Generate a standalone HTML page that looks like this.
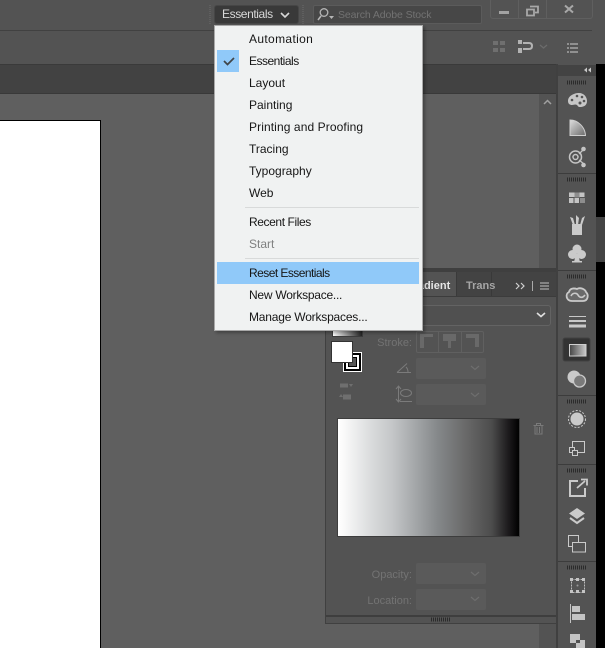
<!DOCTYPE html>
<html><head><meta charset="utf-8"><style>
html,body{margin:0;padding:0;background:#5f5f5f}
#r{position:relative;width:605px;height:648px;overflow:hidden;font-family:"Liberation Sans",sans-serif;background:#5f5f5f}
#r div{position:absolute;box-sizing:border-box}
.mi{left:249px;font-size:12px;line-height:22px;height:22px;color:#161616;white-space:nowrap}
.sel{background:#5a5a5a;border-radius:2px}
.lb{font-size:11px;color:#737373;text-align:right;width:70px;left:342px;line-height:14px}
svg{position:absolute;left:0;top:0}
</style></head><body><div id="r">
<div style="left:0;top:0;width:605px;height:30px;background:#535353"></div>
<div style="left:0;top:30px;width:605px;height:1px;background:#414141"></div>
<div style="left:0;top:31px;width:605px;height:33px;background:#535353"></div>
<div style="left:0;top:64px;width:556px;height:30px;background:#424242;border-top:1px solid #3a3a3a;border-bottom:1px solid #393939"></div>
<div style="left:100px;top:120px;width:1px;height:528px;background:#000"></div>
<div style="left:0;top:120px;width:100px;height:528px;background:#fff;border-top:1px solid #000"></div>
<div style="left:539px;top:94px;width:17px;height:174px;background:#535353"></div>
<div style="left:539px;top:624px;width:17px;height:24px;background:#535353"></div>
<div style="left:556px;top:64px;width:2px;height:584px;background:#404040"></div>
<div style="left:558px;top:64px;width:38px;height:584px;background:#535353"></div>
<div style="left:558px;top:65px;width:38px;height:11px;background:#434343"></div>
<div style="left:596px;top:0;width:9px;height:648px;background:#000"></div>
<div style="left:592px;top:0;width:13px;height:64px;background:#535353"></div>
<div style="left:596px;top:217px;width:9px;height:45px;background:#444"></div>

<div style="left:214px;top:5px;width:85px;height:19px;background:#393939;border:1px solid #464646;border-radius:3px"></div>
<div style="left:222px;top:7px;font-size:12px;line-height:15px;color:#d8d8d8;white-space:nowrap;letter-spacing:-.4px">Essentials</div>
<div style="left:313px;top:5px;width:169px;height:19px;background:#474747;border:1px solid #5b5b5b;border-radius:2px"></div>
<div style="left:338px;top:8px;font-size:10.5px;line-height:14px;color:#727272;white-space:nowrap;letter-spacing:-.1px">Search Adobe Stock</div>
<div style="left:490px;top:-2px;width:103px;height:21px;border:1px solid #5f5f5f;border-radius:3px"></div>
<div style="left:518px;top:0;width:1px;height:18px;background:#5f5f5f"></div>
<div style="left:546px;top:0;width:1px;height:18px;background:#5f5f5f"></div>

<!-- gradient panel -->
<div style="left:325px;top:268px;width:231px;height:356px;background:#535353;border-left:1px solid #404040;border-bottom:1px solid #404040"></div>
<div style="left:326px;top:268px;width:230px;height:4px;background:#3f3f3f"></div>
<div style="left:326px;top:272px;width:230px;height:24px;background:#434343"></div>
<div style="left:326px;top:272px;width:131px;height:25px;background:#535353;border-right:1px solid #3a3a3a"></div>
<div style="left:491px;top:272px;width:1px;height:24px;background:#393939"></div>
<div style="left:326px;top:296px;width:230px;height:1px;background:#3c3c3c"></div>
<div style="left:405px;top:279px;font-size:11px;line-height:14px;font-weight:bold;color:#e6e6e6;white-space:nowrap">Gradient</div>
<div style="left:466px;top:279px;font-size:11px;line-height:14px;font-weight:bold;color:#a6a6a6;white-space:nowrap">Trans</div>
<div style="left:410px;top:305px;width:141px;height:21px;background:#505050;border:1px solid #636363;border-radius:3px"></div>
<div style="left:332px;top:325px;width:31px;height:12px;background:linear-gradient(90deg,#fff,#222);border:1px solid #3c3c3c"></div>
<div style="left:343px;top:352px;width:19px;height:20px;background:#000;border:1px solid #fff"></div>
<div style="left:346px;top:355px;width:13px;height:14px;background:#fff;padding:0"></div>
<div style="left:348px;top:357px;width:9px;height:10px;background:#555;border:1px solid #000"></div>
<div style="left:332px;top:342px;width:20px;height:20px;background:#fff;outline:1px solid #333"></div>
<div class="lb" style="top:336px">Stroke:</div>
<div style="left:416px;top:331px;width:68px;height:22px;border:1px solid #606060;border-radius:2px"></div>
<div style="left:438px;top:331px;width:1px;height:22px;background:#606060"></div>
<div style="left:461px;top:331px;width:1px;height:22px;background:#606060"></div>
<div class="sel" style="left:416px;top:358px;width:70px;height:21px"></div>
<div class="sel" style="left:416px;top:384px;width:70px;height:21px"></div>
<div style="left:337px;top:418px;width:183px;height:119px;border:1px solid #3d3d3d;background:linear-gradient(90deg,#fff 0%,#fafafa 3%,#d6d8d9 20%,#c4c6c8 30%,#9ea1a3 45%,#85888a 55%,#6a6a6a 70%,#4c4c4c 85%,#1d1b1d 94%,#000 100%)"></div>
<div class="lb" style="top:568px">Opacity:</div>
<div class="lb" style="top:594px">Location:</div>
<div class="sel" style="left:416px;top:563px;width:70px;height:21px"></div>
<div class="sel" style="left:416px;top:589px;width:70px;height:21px"></div>
<div style="left:326px;top:615px;width:230px;height:2px;background:#3e3e3e"></div>

<svg width="605" height="648" viewBox="0 0 605 648" fill="none">
<!-- grips top -->
<path d="M210 5v19M303 5v19" stroke="#5f5f5f" stroke-width="2" stroke-dasharray="1 1"/>
<path d="M281 13l4 4 4-4" stroke="#d8d8d8" stroke-width="1.600"/>
<!-- search -->
<circle cx="324" cy="12.500" r="3.800" stroke="#b5b5b5" stroke-width="1.300"/>
<path d="M321 16l-3 4" stroke="#b5b5b5" stroke-width="1.600"/><path d="M329 16h5l-2.500 3z" fill="#b5b5b5"/>
<!-- window -->
<rect x="499" y="11" width="10" height="3" fill="#a3a3a3"/>
<path d="M530 6.500h8v6h-3M527 9.500h7v6h-7z" stroke="#a8a8a8" stroke-width="1.800"/>
<path d="M565 5.500l8 7M573 5.500l-8 7" stroke="#a8a8a8" stroke-width="2"/>
<!-- control bar -->
<g fill="#6f6f6f"><rect x="493" y="41" width="5" height="4"/><rect x="500" y="41" width="5" height="4"/><rect x="493" y="48" width="5" height="4"/><rect x="500" y="48" width="5" height="4"/></g>
<g fill="#b2b2b2"><rect x="518" y="40" width="4" height="4"/><rect x="518" y="48" width="4" height="5"/></g>
<path d="M523 43h6q3 0 3 3t-3 3h-6" stroke="#b2b2b2" stroke-width="2"/>
<path d="M540 45l3.500 3 3.500-3" stroke="#6b6b6b" stroke-width="1.300"/>
<path d="M570 44h8M570 48h8M570 52h8" stroke="#b5b5b5" stroke-width="1.200"/><path d="M567 44h2M567 48h2M567 52h2" stroke="#b5b5b5" stroke-width="1.200"/>
<!-- scroll arrow -->
<path d="M544 104l3.500-3.500 3.500 3.500" stroke="#a0a0a0" stroke-width="1.500"/>
<!-- dock arrows -->
<path d="M587 67.500l-3 2.500 3 2.500zM591 67.500l-3 2.500 3 2.500z" fill="#c8c8c8"/>
<!-- grips -->
<path d="M567 82.500h19M567 179.500h19M567 276.500h19M567 401.500h19M567 470.500h19M567 567.500h19" stroke="#2b2b2b" stroke-width="4" stroke-dasharray="1 1"/>
<path d="M431 619.500h19" stroke="#2b2b2b" stroke-width="4" stroke-dasharray="1 1"/>
<!-- separators -->
<path d="M558 173.500h38M558 270.500h38M558 395.500h38M558 464.500h38M558 561.500h38" stroke="#3c3c3c"/>
<!-- palette -->
<path d="M568 101c0-5 6-8 11-8 5 0 8 4 8 8 0 5-4 6-7 6-2 0-2-1-3-2-2-1-3 0-5 0-2 0-4-1-4-4z" fill="#c6c6c6"/>
<g fill="#535353"><circle cx="572" cy="100" r="1.300"/><circle cx="577" cy="96" r="1.300"/><circle cx="582" cy="97" r="1.300"/><circle cx="584" cy="101" r="1.300"/><circle cx="580" cy="103" r="1.500"/></g>
<!-- gradient guide -->
<defs><linearGradient id="g1" x1="0" y1="0" x2="1" y2="1"><stop offset="0" stop-color="#ddd"/><stop offset="1" stop-color="#6b6b6b"/></linearGradient>
<linearGradient id="g2"><stop offset="0" stop-color="#444"/><stop offset="1" stop-color="#ccc"/></linearGradient></defs>
<path d="M570 120c8 0 15 7 15.500 15.500H570z" fill="url(#g1)" stroke="#cfcfcf"/>
<!-- link/cc libraries -->
<circle cx="575.500" cy="157" r="6" stroke="#c4c4c4" stroke-width="1.500"/><circle cx="575.500" cy="157" r="2.500" stroke="#c4c4c4" stroke-width="1.500"/>
<path d="M579 154l4-4M579 160l5 4" stroke="#c4c4c4" stroke-width="1.300"/>
<circle cx="583.500" cy="149" r="2.300" fill="#c4c4c4"/><circle cx="583.500" cy="165" r="2.300" fill="#c4c4c4"/>
<!-- swatches -->
<path d="M569 192.500h15.500v10.500H569z" fill="#c4c4c4"/><path d="M569 197.500h15.500M574 197.500v6M579.500 197.500v6" stroke="#535353"/><rect x="580" y="198" width="4" height="5" fill="#8d8d8d"/><rect x="574.500" y="192.500" width="5" height="5" fill="#8d8d8d"/>
<!-- brushes -->
<path d="M572 224h10v11h-10z" fill="#cacaca"/><path d="M573 225l-3-8 3 1 2 7zM576 225l0-10 3 3-1 7zM580 225l2-7 3-2-3 9z" fill="#cacaca"/>
<!-- club -->
<g fill="#cacaca"><circle cx="577" cy="249" r="4.500"/><circle cx="572.500" cy="254.500" r="4.500"/><circle cx="581.500" cy="254.500" r="4.500"/><path d="M576 254h2l2 8h-6z"/><rect x="572" y="261" width="10" height="1.500"/></g>
<!-- CC -->
<path d="M572 301c-6 0-7-7-3-9 1-4 5-4 8-3 3-2 8 0 9 3 3 3 2 9-3 9z" fill="#6a6a6a" stroke="#cacaca" stroke-width="1.800"/>
<path d="M571 296c2-4 6-3 7-1s4 4 7 0" stroke="#cacaca" stroke-width="1.600"/>
<!-- stroke -->
<path d="M569 316.500h17" stroke="#c8c8c8"/><path d="M569 321h17" stroke="#c8c8c8" stroke-width="2"/><path d="M569 326h17" stroke="#c8c8c8" stroke-width="3"/>
<!-- active gradient -->
<rect x="563" y="338" width="27" height="23" rx="2" fill="#333" stroke="#424242"/>
<rect x="569.500" y="344.500" width="16.500" height="11.500" fill="url(#g2)" stroke="#d0d0d0"/>
<!-- transparency -->
<circle cx="574" cy="377" r="6.500" fill="#cacaca"/><circle cx="579.500" cy="381" r="6" fill="#7a7a7a" stroke="#cacaca" stroke-width="1.300"/>
<!-- appearance -->
<circle cx="577" cy="419" r="6.500" fill="#cacaca"/><circle cx="577" cy="419" r="8.500" stroke="#cacaca" stroke-dasharray="2 1.500"/>
<!-- styles -->
<path d="M572.500 441.500h12v11h-12z" stroke="#cacaca"/><rect x="569.500" y="447.500" width="5" height="5" fill="#535353" stroke="#cacaca"/><rect x="572.500" y="450.500" width="5" height="5" fill="#535353" stroke="#cacaca"/>
<!-- export -->
<path d="M578 481h-8v15h15v-8" stroke="#cacaca" stroke-width="2"/><path d="M577 488l8-7M581 479.500h6v6" stroke="#cacaca" stroke-width="1.800"/>
<!-- layers -->
<path d="M577 508l8 5.500-8 5.500-8-5.500z" fill="#cacaca"/><path d="M570 518l7 5 7-5" stroke="#cacaca" stroke-width="2"/>
<!-- artboards -->
<rect x="568.500" y="535.500" width="10" height="11" stroke="#cacaca"/><rect x="572.500" y="542.500" width="13" height="9.500" fill="#535353" stroke="#cacaca"/>
<!-- transform -->
<rect x="571.500" y="579.500" width="13" height="13" stroke="#bbb" stroke-dasharray="2 1"/>
<g fill="#c4c4c4"><rect x="570" y="578" width="3" height="3"/><rect x="582" y="578" width="3" height="3"/><rect x="570" y="590" width="3" height="3"/><rect x="582" y="590" width="3" height="3"/><rect x="576" y="578" width="3" height="3"/><rect x="576" y="590" width="3" height="3"/></g><circle cx="577.500" cy="585.500" r="1" fill="#999"/>
<!-- align -->
<path d="M570.500 604v19" stroke="#c4c4c4"/><rect x="572" y="606" width="8" height="6" fill="#c4c4c4"/><rect x="572" y="614" width="13" height="6" fill="#c4c4c4"/>
<!-- pathfinder -->
<rect x="570" y="634" width="10" height="9" fill="#c4c4c4"/><rect x="576" y="640" width="9" height="9" fill="#c4c4c4"/><rect x="576" y="640" width="4" height="3" fill="#535353"/>
<!-- panel icons -->
<path d="M516 283l3 3-3 3M521 283l3 3-3 3" stroke="#d0d0d0" stroke-width="1.200"/>
<path d="M532.500 281v10" stroke="#aaa"/>
<path d="M540 283h9M540 286h9M540 289h9" stroke="#c0c0c0"/>
<path d="M537 313l4 3.500 4-3.500" stroke="#e0e0e0" stroke-width="1.600"/>
<path d="M420 334h13v3h-9v11h-4zM443 334h13v7h-5v7h-3v-7h-5zM466 334h13v13h-4v-9h-9z" fill="#696969"/>
<path d="M397 372.500h14M397 372.500l10-9M406 367q2 2 2 5" stroke="#7b7b7b"/>
<path d="M398.500 387v14M396 389l2.500-3 2.500 3M396 399l2.500 3 2.500-3" stroke="#7b7b7b"/><ellipse cx="406" cy="393" rx="5.500" ry="3.500" stroke="#7b7b7b"/><path d="M400 401.500h12" stroke="#7b7b7b"/>
<path d="M340 383.500h8v4h-8zM343 394.500h8v5h-8z" fill="#6f6f6f"/><path d="M349 384h4l-2 3zM339 397h4l-2-3z" fill="#6f6f6f"/>
<path d="M471 366l4 3.500 4-3.500M471 393l4 3.500 4-3.500M471 572l4 3.500 4-3.500M471 597l4 3.500 4-3.500" stroke="#6e6e6e" stroke-width="1.200"/>
<path d="M533.500 425.500h10M535 425.500v8.500h7v-8.500M537 427v6M539.500 427v6M536.500 425v-1.500h4v1.500" stroke="#7a7a7a"/>
</svg>

<!-- menu -->
<div style="left:214px;top:25px;width:209px;height:306px;background:#f0f2f2;border:1px solid #a9a9a9;box-shadow:2px 2px 3px rgba(0,0,0,.3)"></div>
<div style="left:217px;top:50px;width:22px;height:22px;background:#90c9f9"></div>
<div style="left:217px;top:262px;width:202px;height:22px;background:#90c9f9"></div>
<div style="left:245px;top:207px;width:174px;height:1px;background:#d8dada"></div>
<div style="left:245px;top:258px;width:174px;height:1px;background:#d8dada"></div>
<div class="mi" style="top:28px;letter-spacing:.35px">Automation</div>
<div class="mi" style="top:50px;letter-spacing:-.5px">Essentials</div>
<div class="mi" style="top:72px">Layout</div>
<div class="mi" style="top:94px">Painting</div>
<div class="mi" style="top:116px;letter-spacing:.1px">Printing and Proofing</div>
<div class="mi" style="top:138px">Tracing</div>
<div class="mi" style="top:160px">Typography</div>
<div class="mi" style="top:182px">Web</div>
<div class="mi" style="top:211px;letter-spacing:-.4px">Recent Files</div>
<div class="mi" style="top:233px;color:#7f8080">Start</div>
<div class="mi" style="top:262px;letter-spacing:-.55px">Reset Essentials</div>
<div class="mi" style="top:284px;letter-spacing:-.25px">New Workspace...</div>
<div class="mi" style="top:306px;letter-spacing:-.2px">Manage Workspaces...</div>
<svg width="605" height="648" viewBox="0 0 605 648" fill="none"><path d="M224 61l3.500 3.500 6.500-6.500" stroke="#404548" stroke-width="1.700"/></svg>
</div></body></html>
